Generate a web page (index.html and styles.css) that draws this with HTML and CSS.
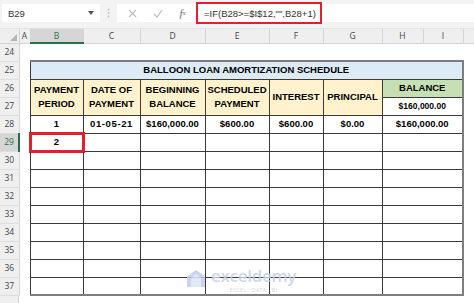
FILE: index.html
```html
<!DOCTYPE html>
<html lang="en">
<head>
    <meta charset="UTF-8">
    <meta name="viewport" content="width=device-width, initial-scale=1.0">
    <title>Balloon Loan Amortization Schedule</title>
    <link rel="stylesheet" href="styles.css">
</head>
<body>
    <div class="formula-bar">
        <div class="name-box">
            <span>B29</span>
            <svg class="caret" width="6" height="4" viewBox="0 0 6 4"><path d="M0 0h6L3 4z" fill="#555"/></svg>
        </div>
        <div class="grip">
            <svg width="3" height="10" viewBox="0 0 3 10"><circle cx="1.5" cy="1.5" r="1" fill="#c4c4c4"/><circle cx="1.5" cy="5" r="1" fill="#c4c4c4"/><circle cx="1.5" cy="8.5" r="1" fill="#c4c4c4"/></svg>
        </div>
        <div class="formula-box">
            <span class="fx-btn">
                <svg width="9" height="9" viewBox="0 0 9 9"><path d="M1 1l7 7M8 1L1 8" stroke="#bdbdbd" stroke-width="1.2" fill="none"/></svg>
            </span>
            <span class="fx-btn">
                <svg width="10" height="9" viewBox="0 0 10 9"><path d="M1 5l3 3 5-7" stroke="#bdbdbd" stroke-width="1.2" fill="none"/></svg>
            </span>
            <span class="fx-btn fx-label">f<sub>x</sub></span>
            <span class="formula">=IF(B28&gt;=$I$12,"",B28+1)</span>
        </div>
    </div>

    <div class="sheet">
        <table class="grid">
            <colgroup>
                <col class="w-rh">
                <col class="w-a">
                <col class="w-b">
                <col class="w-c">
                <col class="w-d">
                <col class="w-e">
                <col class="w-f">
                <col class="w-g">
                <col class="w-h">
                <col class="w-i">
                <col class="w-j">
            </colgroup>
            <tr class="col-heads">
                <th class="corner"><svg width="7" height="7" viewBox="0 0 7 7"><path d="M7 0v7H0z" fill="#b5b5b5"/></svg></th>
                <th>A</th>
                <th class="active">B</th>
                <th>C</th>
                <th>D</th>
                <th>E</th>
                <th>F</th>
                <th>G</th>
                <th>H</th>
                <th>I</th>
                <th></th>
            </tr>
            <tr>
                <td class="rh">24</td>
                <td></td><td></td><td></td><td></td><td></td><td></td><td></td><td></td><td></td><td></td>
            </tr>
            <tr>
                <td class="rh">25</td>
                <td></td>
                <td class="c title top left right" colspan="8">BALLOON LOAN AMORTIZATION SCHEDULE</td>
                <td></td>
            </tr>
            <tr>
                <td class="rh">26</td>
                <td></td>
                <td class="c head left" rowspan="2">PAYMENT<br>PERIOD</td>
                <td class="c head" rowspan="2">DATE OF<br>PAYMENT</td>
                <td class="c head" rowspan="2">BEGINNING<br>BALANCE</td>
                <td class="c head" rowspan="2">SCHEDULED<br>PAYMENT</td>
                <td class="c head" rowspan="2">INTEREST</td>
                <td class="c head" rowspan="2">PRINCIPAL</td>
                <td class="c bal-head right" colspan="2">BALANCE</td>
                <td></td>
            </tr>
            <tr>
                <td class="rh">27</td>
                <td></td>
                <td class="c small right" colspan="2">$160,000.00</td>
                <td></td>
            </tr>
            <tr>
                <td class="rh">28</td>
                <td></td>
                <td class="c left">1</td>
                <td class="c date">01-05-21</td>
                <td class="c">$160,000.00</td>
                <td class="c">$600.00</td>
                <td class="c">$600.00</td>
                <td class="c">$0.00</td>
                <td class="c right" colspan="2">$160,000.00</td>
                <td></td>
            </tr>
            <tr>
                <td class="rh active">29</td>
                <td></td>
                <td class="c picked">2</td>
                <td class="c"></td><td class="c"></td><td class="c"></td><td class="c"></td><td class="c"></td>
                <td class="c right" colspan="2"></td>
                <td></td>
            </tr>
            <tr>
                <td class="rh">30</td><td></td>
                <td class="c left"></td><td class="c"></td><td class="c"></td><td class="c"></td><td class="c"></td><td class="c"></td>
                <td class="c right" colspan="2"></td><td></td>
            </tr>
            <tr>
                <td class="rh">31</td><td></td>
                <td class="c left"></td><td class="c"></td><td class="c"></td><td class="c"></td><td class="c"></td><td class="c"></td>
                <td class="c right" colspan="2"></td><td></td>
            </tr>
            <tr>
                <td class="rh">32</td><td></td>
                <td class="c left"></td><td class="c"></td><td class="c"></td><td class="c"></td><td class="c"></td><td class="c"></td>
                <td class="c right" colspan="2"></td><td></td>
            </tr>
            <tr>
                <td class="rh">33</td><td></td>
                <td class="c left"></td><td class="c"></td><td class="c"></td><td class="c"></td><td class="c"></td><td class="c"></td>
                <td class="c right" colspan="2"></td><td></td>
            </tr>
            <tr>
                <td class="rh">34</td><td></td>
                <td class="c left"></td><td class="c"></td><td class="c"></td><td class="c"></td><td class="c"></td><td class="c"></td>
                <td class="c right" colspan="2"></td><td></td>
            </tr>
            <tr>
                <td class="rh">35</td><td></td>
                <td class="c left"></td><td class="c"></td><td class="c"></td><td class="c"></td><td class="c"></td><td class="c"></td>
                <td class="c right" colspan="2"></td><td></td>
            </tr>
            <tr>
                <td class="rh">36</td><td></td>
                <td class="c left"></td><td class="c"></td><td class="c"></td><td class="c"></td><td class="c"></td><td class="c"></td>
                <td class="c right" colspan="2"></td><td></td>
            </tr>
            <tr>
                <td class="rh">37</td><td></td>
                <td class="c left bottom"></td><td class="c bottom"></td><td class="c bottom"></td><td class="c bottom"></td><td class="c bottom"></td><td class="c bottom"></td>
                <td class="c right bottom" colspan="2"></td><td></td>
            </tr>
        </table>

        <!-- site watermark laid over the grid -->
        <div class="watermark">
            <svg class="wm-logo" width="18" height="17" viewBox="0 0 18 17">
                <path d="M9 0L18 6.5V17H0V6.5z" fill="#c3cdea"/>
                <path d="M9 4L14 8v9H4V8z" fill="#dfe5f5"/>
            </svg>
            <div class="wm-text">
                <span class="wm-name">exceldemy</span>
                <span class="wm-tag">EXCEL · DATA · BI</span>
            </div>
        </div>
    </div>
</body>
</html>
```

FILE: styles.css
```css
body {
    margin: 0;
    width: 474px;
    height: 303px;
    overflow: hidden;
    background-color: #ffffff;
    font-family: "Liberation Sans", Arial, sans-serif;
}

/* ---------- formula bar ---------- */

.formula-bar {
    display: flex;
    align-items: flex-start;
    height: 29px;
    padding-top: 4px;
    box-sizing: border-box;
    background-color: #f3f3f3;
    border-bottom: 1px solid #e2e2e2;
}

.name-box {
    display: flex;
    align-items: center;
    justify-content: space-between;
    width: 98px;
    height: 18px;
    margin-left: 2px;
    padding: 0 6px 0 6px;
    box-sizing: border-box;
    background-color: #ffffff;
    font-size: 9.5px;
    color: #333333;
}

.grip {
    display: flex;
    justify-content: center;
    align-items: center;
    width: 17px;
    height: 18px;
}

.formula-box {
    flex: 1;
    display: flex;
    align-items: center;
    height: 18px;
    padding-left: 3px;
    background-color: #ffffff;
}

.fx-btn {
    display: flex;
    justify-content: center;
    align-items: center;
    width: 25px;
    height: 18px;
}

.fx-label {
    font-family: "Liberation Serif", serif;
    font-style: italic;
    font-size: 11px;
    color: #6a6a6a;
}

.fx-label sub {
    font-size: 7px;
}

.formula {
    display: flex;
    align-items: center;
    height: 22px;
    margin-left: 1px;
    padding: 0 4px 0 6px;
    box-sizing: border-box;
    border: 2.5px solid #e0212b;
    font-size: 9.5px;
    color: #333333;
    white-space: nowrap;
}

/* ---------- sheet grid ---------- */

.sheet {
    position: relative;
    height: 274px;
    overflow: hidden;
    /* row-header strip continues below the last drawn row */
    background: linear-gradient(90deg, #efefef 18px, #d4d4d4 18px, #d4d4d4 19px, #ffffff 19px);
}

.grid {
    table-layout: fixed;
    border-collapse: collapse;
    width: 474px;
    background-color: #ffffff;
}

.w-rh { width: 19px; }
.w-a { width: 11px; }
.w-b { width: 53px; }
.w-c { width: 57px; }
.w-d { width: 65px; }
.w-e { width: 64px; }
.w-f { width: 54px; }
.w-g { width: 59px; }
.w-h { width: 41px; }
.w-i { width: 40px; }
.w-j { width: 11px; }

.grid td,
.grid th {
    box-sizing: border-box;
    padding: 0;
    height: 18px;
}

.col-heads th {
    height: 14px;
    background-color: #efefef;
    border-right: 1px solid #d4d4d4;
    border-bottom: 1px solid #d4d4d4;
    font-family: "Open Sans", sans-serif;
    font-weight: normal;
    font-size: 8.5px;
    color: #444444;
    line-height: 12px;
}

.col-heads th.active {
    background-color: #d6d6d6;
    border-bottom: 2px solid #217346;
    color: #217346;
}

.col-heads .corner {
    text-align: right;
    vertical-align: bottom;
    padding: 0 2px 2px 0;
}

.corner svg {
    display: block;
    margin-left: auto;
}

.rh {
    background-color: #efefef;
    border-right: 1px solid #d4d4d4;
    border-bottom: 1px solid #dedede;
    font-family: "Open Sans", sans-serif;
    font-size: 8.5px;
    line-height: 12px;
    color: #444444;
    text-align: center;
}

.rh.active {
    background-color: #d6d6d6;
    border-right: 2px solid #217346;
    color: #217346;
}

/* ---------- schedule table ---------- */

.c {
    border: 1px solid #3a3a3a;
    text-align: center;
    font-weight: bold;
    font-size: 9.5px;
    line-height: 12px;
    color: #000000;
}

.c.top { border-top: 2px solid #7e7e7e; }
.c.right { border-right: 2px solid #7e7e7e; }
.c.bottom { border-bottom: 2px solid #7e7e7e; }

.title {
    background-color: #ddebf7;
}

.head {
    background-color: #fff2cc;
    line-height: 14px;
}

.bal-head {
    background-color: #c6e0b4;
}

.small {
    font-size: 8.5px;
}

.date {
    letter-spacing: 0.6px;
}

.c.picked {
    border: 3px solid #e0212b;
}

/* ---------- watermark ---------- */

.watermark {
    position: absolute;
    left: 187px;
    top: 235px;
    display: flex;
    align-items: flex-start;
    gap: 6px;
    opacity: 0.85;
}

.wm-logo {
    margin-top: 6px;
}

.wm-text {
    display: flex;
    flex-direction: column;
    align-items: center;
}

.wm-name {
    font-family: "Open Sans", sans-serif;
    font-weight: 600;
    font-size: 17px;
    line-height: 23px;
    color: #c6d0ec;
    letter-spacing: -0.3px;
}

.wm-tag {
    font-family: "Open Sans", sans-serif;
    font-size: 5px;
    line-height: 7px;
    color: #c8cfe0;
    letter-spacing: 0.5px;
}
```
